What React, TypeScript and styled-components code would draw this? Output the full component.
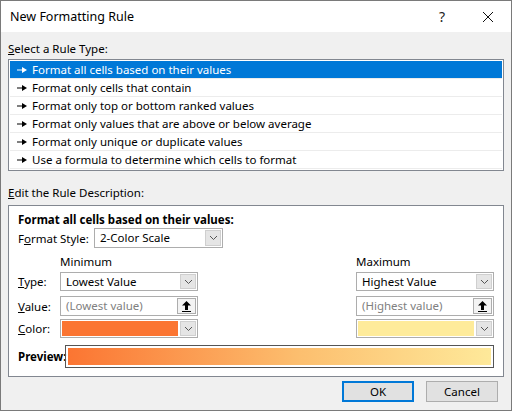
import React from 'react';
import styled, { createGlobalStyle } from 'styled-components';

const Global = createGlobalStyle`
  html, body { margin: 0; padding: 0; background: #fff; }
  body { font-family: 'Noto Sans', 'Liberation Sans', sans-serif; font-size: 11.5px; color: #000; }
`;

const Win = styled.div`
  width: 510px; height: 409px; border: 1px solid #7a7a7a; background: #f0f0f0;
  display: flex; flex-direction: column;
`;
const TitleBar = styled.div`
  height: 31px; background: #fff; display: flex; align-items: center; padding-left: 9px;
  font-size: 12.5px;
`;
const TitleText = styled.div` flex: 1; `;
const TitleBtn = styled.div<{ $w: number }>`
  width: ${p => p.$w}px; display: flex; justify-content: center; font-size: 14px; color: #222;
`;
const Body = styled.div` padding: 7px 7px 0 7px; display: flex; flex-direction: column; `;
const Label = styled.div<{ $bold?: boolean; $mt?: number; $h?: number }>`
  height: ${p => p.$h ?? 20}px; line-height: ${p => p.$h ?? 20}px; margin-top: ${p => p.$mt ?? 0}px;
  font-weight: ${p => (p.$bold ? 700 : 400)};
  u { text-decoration: underline; }
`;
const ListBox = styled.div`
  border: 1px solid #828790; background: #fff; height: 108px; padding: 1px;
`;
const ListRow = styled.div<{ $sel?: boolean }>`
  height: 17px; line-height: 17px; padding-left: 7px; border-bottom: 1px solid #ececec;
  background: ${p => (p.$sel ? '#0078d7' : '#fff')}; color: ${p => (p.$sel ? '#fff' : '#000')};
  display: flex; align-items: center; gap: 5px;
`;
const Desc = styled.div`
  margin-top: 2px; border: 1px solid #828790; background: #fff; height: 172px; box-sizing: border-box;
  padding: 6px 9px 0 9px; display: flex; flex-direction: column;
`;
const Row = styled.div<{ $mt?: number }>`
  display: flex; align-items: center; margin-top: ${p => p.$mt ?? 0}px;
`;
const FieldLabel = styled.div<{ $w: number }>` width: ${p => p.$w}px; u { text-decoration: underline; } `;
const Combo = styled.div<{ $w: number; $h?: number }>`
  width: ${p => p.$w}px; height: ${p => p.$h ?? 19}px; border: 1px solid #adadad; background: #fff;
  display: flex; align-items: stretch; box-sizing: border-box;
`;
const ComboText = styled.div<{ $muted?: boolean }>`
  flex: 1; padding-left: 5px; line-height: 17px; color: ${p => (p.$muted ? '#808080' : '#000')};
`;
const DropBtn = styled.div`
  width: 16px; margin: 1px; background: #e5e5e5; border: 1px solid #cfcfcf; box-sizing: border-box;
  display: flex; align-items: center; justify-content: center;
`;
const UpBtn = styled(DropBtn)` width: 19px; background: #f3f3f3; border-color: #adadad; `;
const Swatch = styled.div<{ $c: string }>` flex: 1; margin: 1px; background: ${p => p.$c}; `;
const Spacer = styled.div` flex: 1; `;
const Col = styled.div<{ $w: number }>` width: ${p => p.$w}px; `;
const PreviewBar = styled.div`
  flex: 1; height: 23px; border: 1px solid #555; box-sizing: border-box; padding: 2px;
  div { height: 100%; background: linear-gradient(to right, #fb7532, #fcbf6f 55%, #fee99a); }
`;
const Footer = styled.div` display: flex; justify-content: flex-end; gap: 12px; padding: 4px 13px 0 0; `;
const Button = styled.div<{ $def?: boolean }>`
  width: 72px; height: 21px; box-sizing: border-box; background: #e1e1e1;
  border: ${p => (p.$def ? '2px solid #0078d7' : '1px solid #adadad')};
  display: flex; align-items: center; justify-content: center;
`;

const Chevron = () => (
  <svg width="9" height="6" viewBox="0 0 9 6"><path d="M1 1l3.5 3.5L8 1" fill="none" stroke="#555" strokeWidth="1" /></svg>
);
const UpArrow = () => (
  <svg width="9" height="11" viewBox="0 0 9 11"><path d="M4.5 0L0 4.5h3V9h3V4.5h3z M0 10h9v1H0z" fill="#000" /></svg>
);
const Bullet = ({ c }: { c: string }) => (
  <svg width="10" height="6" viewBox="0 0 10 6"><path d="M0 2.5h5V0l5 3-5 3V3.5H0z" fill={c} /></svg>
);

const rules = [
  'Format all cells based on their values',
  'Format only cells that contain',
  'Format only top or bottom ranked values',
  'Format only values that are above or below average',
  'Format only unique or duplicate values',
  'Use a formula to determine which cells to format',
];

export default function App() {
  return (
    <>
      <Global />
      <Win>
        <TitleBar>
          <TitleText>New Formatting Rule</TitleText>
          <TitleBtn $w={46}>?</TitleBtn>
          <TitleBtn $w={46}>
            <svg width="12" height="12" viewBox="0 0 12 12"><path d="M1 1l10 10M11 1L1 11" stroke="#111" strokeWidth="1" /></svg>
          </TitleBtn>
        </TitleBar>
        <Body>
          <Label><u>S</u>elect a Rule Type:</Label>
          <ListBox>
            {rules.map((r, i) => (
              <ListRow key={r} $sel={i === 0}><Bullet c={i === 0 ? '#fff' : '#000'} />{r}</ListRow>
            ))}
          </ListBox>
          <Label $mt={12}><u>E</u>dit the Rule Description:</Label>
          <Desc>
            <Label $bold $h={16}>Format all cells based on their values:</Label>
            <Row>
              <FieldLabel $w={76}>F<u>o</u>rmat Style:</FieldLabel>
              <Combo $w={129} $h={20}><ComboText>2-Color Scale</ComboText><DropBtn><Chevron /></DropBtn></Combo>
            </Row>
            <Row $mt={6}>
              <FieldLabel $w={42} />
              <Col $w={138}>Minimum</Col>
              <Spacer />
              <Col $w={138}>Maximum</Col>
            </Row>
            <Row $mt={3}>
              <FieldLabel $w={42}><u>T</u>ype:</FieldLabel>
              <Combo $w={138}><ComboText>Lowest Value</ComboText><DropBtn><Chevron /></DropBtn></Combo>
              <Spacer />
              <Combo $w={138}><ComboText>Highest Value</ComboText><DropBtn><Chevron /></DropBtn></Combo>
            </Row>
            <Row $mt={5}>
              <FieldLabel $w={42}><u>V</u>alue:</FieldLabel>
              <Combo $w={138} $h={20}><ComboText $muted>(Lowest value)</ComboText><UpBtn><UpArrow /></UpBtn></Combo>
              <Spacer />
              <Combo $w={138} $h={20}><ComboText $muted>(Highest value)</ComboText><UpBtn><UpArrow /></UpBtn></Combo>
            </Row>
            <Row $mt={3}>
              <FieldLabel $w={42}><u>C</u>olor:</FieldLabel>
              <Combo $w={138}><Swatch $c="#fb7532" /><DropBtn><Chevron /></DropBtn></Combo>
              <Spacer />
              <Combo $w={138}><Swatch $c="#feeb9a" /><DropBtn><Chevron /></DropBtn></Combo>
            </Row>
            <Row $mt={7}>
              <FieldLabel $w={47}><b>Preview:</b></FieldLabel>
              <PreviewBar><div /></PreviewBar>
            </Row>
          </Desc>
        </Body>
        <Footer>
          <Button $def>OK</Button>
          <Button>Cancel</Button>
        </Footer>
      </Win>
    </>
  );
}
